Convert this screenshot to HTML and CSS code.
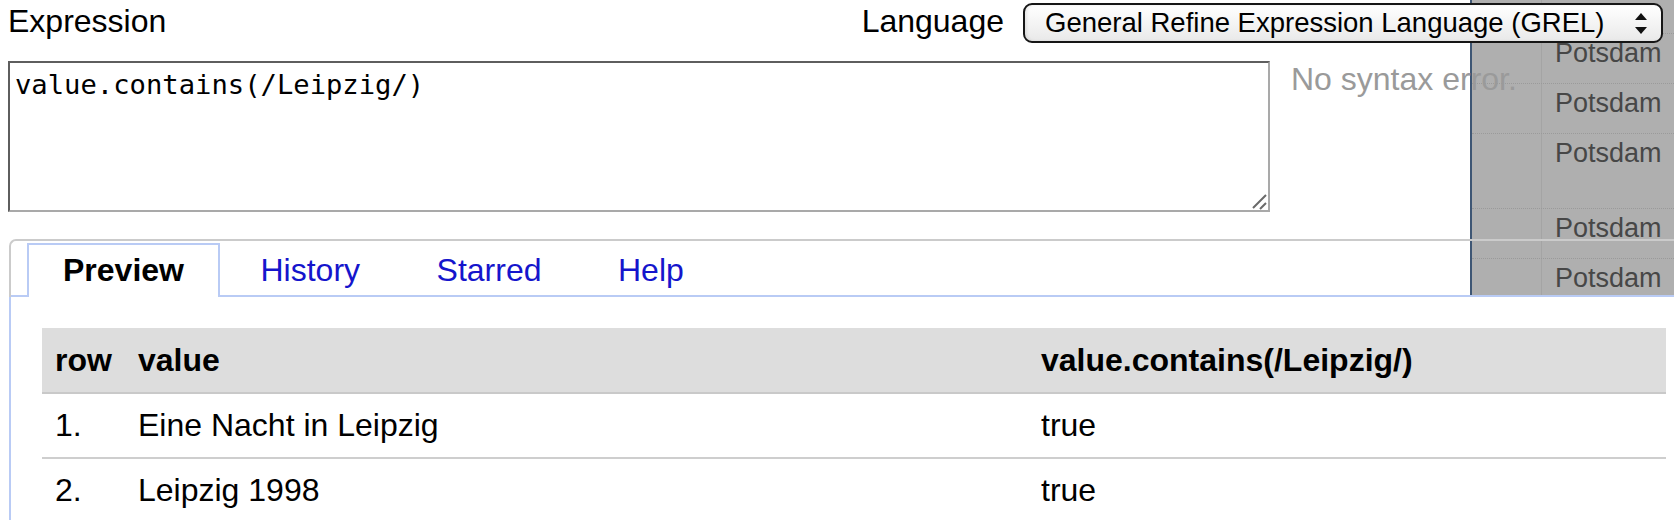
FILE: index.html
```html
<!DOCTYPE html>
<html lang="de">
<head>
<meta charset="utf-8">
<title>Expression</title>
<link rel="stylesheet" href="styles.css">
</head>
<body>
<div class="backdrop" aria-hidden="true">
  <div class="bd-row r0"><div class="bd-c1"></div><div class="bd-c2"></div></div>
  <div class="bd-row r1"><div class="bd-c1"></div><div class="bd-c2">Potsdam</div></div>
  <div class="bd-row r2"><div class="bd-c1"></div><div class="bd-c2">Potsdam</div></div>
  <div class="bd-row r3"><div class="bd-c1"></div><div class="bd-c2">Potsdam</div></div>
  <div class="bd-row r4"><div class="bd-c1"></div><div class="bd-c2">Potsdam</div></div>
  <div class="bd-row r5"><div class="bd-c1"></div><div class="bd-c2">Potsdam</div></div>
</div>

<div class="dialog">
  <div class="head-row">
    <div class="label">Expression</div>
    <div class="lang">
      <span class="label">Language</span>
      <div class="select">
        <span class="select-text">General Refine Expression Language (GREL)</span>
        <svg class="select-arrows" width="12" height="21" viewBox="0 0 12 21"><path d="M6 0 L12 7 L0 7 Z" fill="#111"/><path d="M0 14 L12 14 L6 21 Z" fill="#111"/></svg>
      </div>
    </div>
  </div>

  <div class="expr-row">
    <div class="expr-wrap">
      <textarea class="expr" spellcheck="false">value.contains(/Leipzig/)</textarea>
      <svg class="grip" width="16" height="16" viewBox="0 0 16 16"><path d="M1 14 L14 1 M8 15 L14 9" stroke="#6a6a6a" stroke-width="2" fill="none"/></svg>
    </div>
    <div class="status">No syntax error.</div>
  </div>

  <div class="tabs">
    <ul class="tab-nav">
      <li class="tab active">Preview</li>
      <li class="tab"><a class="tab-link">History</a></li>
      <li class="tab"><a class="tab-link">Starred</a></li>
      <li class="tab"><a class="tab-link">Help</a></li>
    </ul>
    <div class="panel">
      <table class="preview">
        <colgroup>
          <col class="c-row">
          <col class="c-value">
          <col class="c-result">
        </colgroup>
        <thead>
          <tr><th>row</th><th>value</th><th>value.contains(/Leipzig/)</th></tr>
        </thead>
        <tbody>
          <tr><td>1.</td><td>Eine Nacht in Leipzig</td><td>true</td></tr>
          <tr><td>2.</td><td>Leipzig 1998</td><td>true</td></tr>
        </tbody>
      </table>
    </div>
  </div>
</div>
</body>
</html>
```

FILE: styles.css
```css
html, body {
  margin: 0;
  padding: 0;
  overflow: hidden;
  background: #fff;
}

body {
  position: relative;
  width: 1674px;
  height: 520px;
  font-family: "Liberation Sans", Arial, Helvetica, sans-serif;
  font-size: 32px;
  color: #000;
}

/* background data grid seen behind the dialog */
.backdrop {
  position: absolute;
  top: 0;
  left: 1470px;
  width: 204px;
  height: 296px;
  background: #afafaf;
  border-left: 2px solid #3e5674;
  box-sizing: border-box;
  overflow: hidden;
  z-index: 0;
  display: flex;
  flex-direction: column;
}

.bd-row {
  display: flex;
  flex: none;
  border-bottom: 1px dotted #9a9a9a;
  box-sizing: border-box;
}

.r0 { height: 34px; }
.r1 { height: 50px; }
.r2 { height: 50px; }
.r3 { height: 75px; }
.r4 { height: 50px; }
.r5 { height: 50px; border-bottom: 0; }

.bd-c1 {
  width: 69px;
  flex: none;
  border-right: 1px solid #a4a4a4;
}

.bd-c2 {
  flex: 1;
  padding: 4px 0 0 13px;
  font-size: 27px;
  color: #474747;
  white-space: nowrap;
}

/* dialog */
.dialog {
  position: relative;
  z-index: 1;
}

.head-row {
  display: flex;
  justify-content: space-between;
  align-items: center;
  height: 40px;
  margin-top: 3px;
  padding: 0 11px 0 8px;
}

.label {
  font-size: 32px;
  line-height: 36px;
  margin-top: -4px;
}

.lang {
  display: flex;
  align-items: center;
  gap: 19px;
}

.select {
  width: 640px;
  height: 40px;
  box-sizing: border-box;
  border: 2px solid #161616;
  border-radius: 9px;
  background: linear-gradient(#ffffff, #f2f2f2 60%, #e9e9e9);
  box-shadow: inset 2px 0 3px rgba(0, 0, 0, 0.08);
  display: flex;
  align-items: center;
  padding: 0 14px 0 20px;
}

.select-text {
  font-size: 27.5px;
  white-space: nowrap;
}

.select-arrows {
  margin-left: auto;
  display: block;
}

.expr-row {
  display: flex;
  align-items: flex-start;
  gap: 21px;
  margin-top: 18px;
  padding-left: 8px;
}

.expr-wrap {
  position: relative;
  width: 1262px;
  height: 151px;
}

.expr {
  display: block;
  box-sizing: border-box;
  width: 1262px;
  height: 151px;
  margin: 0;
  padding: 6px 5px 4px;
  border-width: 2px;
  border-style: solid;
  border-color: #5e5e5e #a9a9a9 #a9a9a9 #5e5e5e;
  font-family: "DejaVu Sans Mono", Menlo, monospace;
  font-size: 27.2px;
  line-height: 32px;
  color: #000;
  background: #fff;
  resize: none;
  outline: none;
}

.grip {
  position: absolute;
  right: 2px;
  bottom: 2px;
  display: block;
}

.status {
  color: #9a9a9a;
  font-size: 32px;
  margin-top: 0;
  white-space: nowrap;
}

/* tabs */
.tabs {
  margin: 27px 0 0 9px;
  border-top: 2px solid #cbcbcb;
  border-left: 2px solid #cbcbcb;
  border-top-left-radius: 7px;
}

.tab-nav {
  list-style: none;
  margin: 0;
  padding: 2px 0 0 16px;
  display: flex;
  border-bottom: 2px solid #b9cbf5;
}

.tab {
  padding: 7px 34px 9px;
  border: 2px solid transparent;
  border-bottom: 0;
  margin: 0 4.5px -2px 0;
  line-height: 36px;
}

.tab.active {
  border-color: #b9cbf5;
  background: #fff;
  font-weight: bold;
}

.tab-link {
  color: #1515cc;
  text-decoration: none;
}

.panel {
  margin-left: -2px;
  border-left: 2px solid #b9cbf5;
  background: #fff;
  padding: 31px 0 0 31px;
  height: 300px;
}

.preview {
  border-collapse: collapse;
  width: 1624px;
  table-layout: fixed;
}

.c-row { width: 83px; }
.c-value { width: 903px; }
.c-result { width: 638px; }

.preview th,
.preview td {
  height: 65px;
  padding: 0 13px;
  text-align: left;
  vertical-align: middle;
  border-bottom: 2px solid #cecece;
  white-space: nowrap;
  box-sizing: border-box;
}

.preview th {
  background: #dddddd;
  font-weight: bold;
  border-bottom-color: #c9c9c9;
}
```
